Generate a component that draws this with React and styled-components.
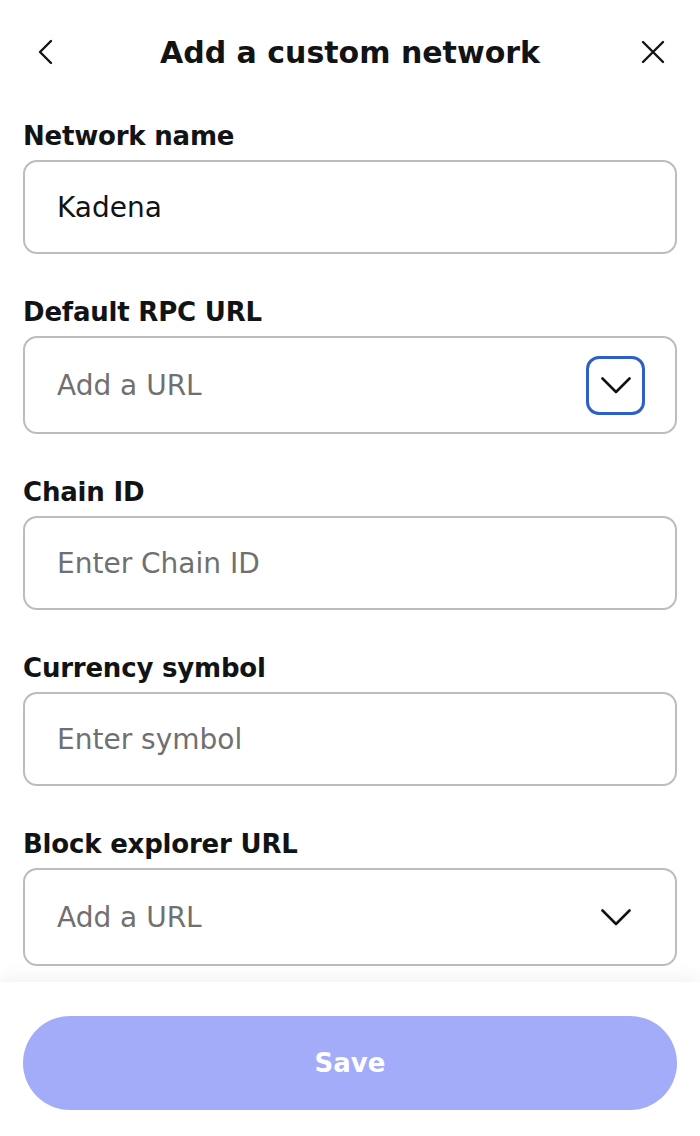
import styled, { createGlobalStyle } from 'styled-components';

const GlobalStyle = createGlobalStyle`
  * { box-sizing: border-box; }
  html, body {
    margin: 0;
    padding: 0;
    background: #fff;
    font-family: 'DejaVu Sans', 'Noto Sans', sans-serif;
    color: #121314;
  }
`;

const Page = styled.div`
  width: 700px;
  height: 1136px;
  display: flex;
  flex-direction: column;
  background: #fff;
  overflow: hidden;
`;

const Header = styled.header`
  height: 104px;
  flex-shrink: 0;
  display: grid;
  grid-template-columns: 80px 1fr 80px;
  align-items: center;
`;

const IconButton = styled.button`
  border: none;
  background: none;
  padding: 0;
  display: flex;
  align-items: center;
  justify-content: ${(p) => p.$align || 'center'};
  padding-left: ${(p) => p.$padLeft || 0}px;
  padding-right: ${(p) => p.$padRight || 0}px;
  color: #121314;
  cursor: pointer;
`;

const Title = styled.h1`
  margin: 0;
  text-align: center;
  font-size: 30px;
  font-weight: 700;
`;

const Form = styled.div`
  flex: 1;
  padding: 16px 23px 0;
  display: flex;
  flex-direction: column;
  gap: 42px;
`;

const Group = styled.div`
  display: flex;
  flex-direction: column;
  gap: 8px;
`;

const Label = styled.label`
  font-size: 26px;
  line-height: 32px;
  font-weight: 700;
  letter-spacing: -0.2px;
`;

const Field = styled.div`
  height: ${(p) => (p.$select ? 98 : 94)}px;
  border: 2px solid #bbbbc4;
  border-radius: 14px;
  display: flex;
  align-items: center;
  padding: 0 30px 0 32px;
  font-size: 28px;
  color: ${(p) => (p.$placeholder ? '#707070' : '#121314')};
`;

const Value = styled.span`
  flex: 1;
`;

const Chevron = styled.div`
  width: 59px;
  height: 59px;
  margin-left: auto;
  display: flex;
  align-items: center;
  justify-content: center;
  border-radius: 13px;
  border: 3px solid ${(p) => (p.$focused ? '#2c5fcc' : 'transparent')};
`;

const Footer = styled.footer`
  height: 154px;
  flex-shrink: 0;
  padding: 34px 23px 0;
  background: #fff;
  box-shadow: 0 -6px 16px rgba(0, 0, 0, 0.05);
`;

const SaveButton = styled.button`
  width: 100%;
  height: 94px;
  border: none;
  border-radius: 47px;
  background: #a3acf8;
  color: #fff;
  font-family: inherit;
  font-size: 26px;
  font-weight: 700;
`;

const ChevronDown = () => (
  <svg width="30" height="17" viewBox="0 0 30 17" fill="none">
    <path d="M1.5 1.5L15 15L28.5 1.5" stroke="#121314" strokeWidth="2.6" strokeLinecap="round" strokeLinejoin="round" />
  </svg>
);

const fields = [
  { label: 'Network name', value: 'Kadena' },
  { label: 'Default RPC URL', placeholder: 'Add a URL', select: true, focused: true },
  { label: 'Chain ID', placeholder: 'Enter Chain ID' },
  { label: 'Currency symbol', placeholder: 'Enter symbol' },
  { label: 'Block explorer URL', placeholder: 'Add a URL', select: true },
];

const App = () => {
  return (
    <>
      <GlobalStyle />
      <Page>
        <Header>
          <IconButton $align="flex-start" $padLeft={38}>
            <svg width="16" height="26" viewBox="0 0 16 26" fill="none">
              <path d="M13 2L2 13L13 24" stroke="#121314" strokeWidth="2.4" strokeLinecap="round" strokeLinejoin="round" />
            </svg>
          </IconButton>
          <Title>Add a custom network</Title>
          <IconButton $align="flex-end" $padRight={35}>
            <svg width="24" height="24" viewBox="0 0 24 24" fill="none">
              <path d="M2 2L22 22M22 2L2 22" stroke="#121314" strokeWidth="2.4" strokeLinecap="round" />
            </svg>
          </IconButton>
        </Header>
        <Form>
          {fields.map((f) => (
            <Group key={f.label}>
              <Label>{f.label}</Label>
              <Field $select={f.select} $placeholder={!f.value}>
                <Value>{f.value || f.placeholder}</Value>
                {f.select && (
                  <Chevron $focused={f.focused}>
                    <ChevronDown />
                  </Chevron>
                )}
              </Field>
            </Group>
          ))}
        </Form>
        <Footer>
          <SaveButton>Save</SaveButton>
        </Footer>
      </Page>
    </>
  );
};

export default App;
